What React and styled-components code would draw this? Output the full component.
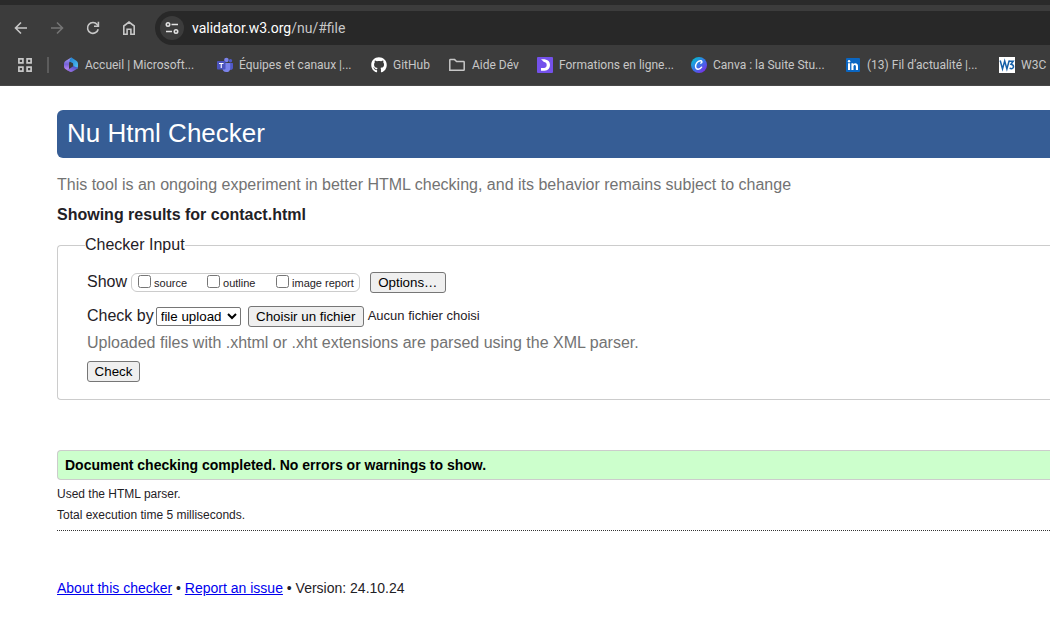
import React, { useRef, useState } from "react";
import styled, { createGlobalStyle } from "styled-components";
import { FaGithub } from "react-icons/fa";

const GlobalStyle = createGlobalStyle`
  * { box-sizing: border-box; }
  body {
    margin: 0;
    background: #fff;
    color: #1f2126;
    font-family: Arial, "Liberation Sans", sans-serif;
    font-size: 16px;
    line-height: 20px;
    overflow-x: hidden;
  }
`;

const Browser = styled.header`
  background: #3c3c3c;
  border-top: 5px solid #2a2a2a;
  border-bottom: 1px solid #484848;
  font-family: "Segoe UI", Roboto, sans-serif;
  overflow: hidden;
`;

const Toolbar = styled.div`
  display: flex;
  align-items: center;
  padding: 6px 0 0 11px;
`;

const NavButton = styled.button`
  display: grid;
  place-items: center;
  flex: none;
  width: 20px;
  height: 20px;
  margin-right: 16px;
  padding: 0;
  border: 0;
  background: none;
  color: ${(p) => (p.disabled ? "#757575" : "#c7c7c7")};
`;

const AddressBar = styled.div`
  display: flex;
  flex: 1;
  align-items: center;
  gap: 8px;
  height: 34px;
  padding-left: 5px;
  border-radius: 17px 0 0 17px;
  background: #282828;
`;

const SiteInfo = styled.button`
  display: grid;
  place-items: center;
  flex: none;
  width: 24px;
  height: 24px;
  padding: 0;
  border: 0;
  border-radius: 50%;
  background: #3c3c3c;
  color: #e3e3e3;
`;

const Url = styled.span`
  color: #c7c7c7;
  font-size: 14px;
  white-space: nowrap;
  b {
    color: #fff;
    font-weight: 400;
  }
`;

const Bookmarks = styled.nav`
  display: flex;
  align-items: center;
  height: 40px;
  padding-left: 17px;
`;

const AppsButton = styled(NavButton)`
  width: 16px;
  height: 16px;
  margin-right: 14px;
`;

const Divider = styled.span`
  flex: none;
  width: 2px;
  height: 16px;
  margin-right: 14px;
  background: #5c5c5c;
`;

const Bookmark = styled.a`
  display: flex;
  flex: none;
  align-items: center;
  gap: 6px;
  width: ${(p) => p.$width}px;
  color: #c7c7c7;
  font-size: 12px;
  text-decoration: none;
  white-space: nowrap;
  svg { flex: none; }
`;

const Page = styled.main`
  padding: 24px 0 0 57px;
`;

const Banner = styled.h1`
  margin: 0 0 17px;
  padding: 8px 10px 10px;
  border-radius: 6px 0 0 6px;
  background: #365d95;
  color: #fff;
  font-size: 26px;
  font-weight: 400;
  line-height: 30px;
`;

const Note = styled.p`
  margin: 0;
  color: #737373;
`;

const ResultsTitle = styled.h2`
  margin: 10px 0;
  font-size: 16px;
`;

const Fieldset = styled.fieldset`
  min-width: 0;
  margin: 0 0 50px;
  padding: 0 0 10px 27px;
  border: 1px solid #ccc;
  border-right: 0;
  border-radius: 4px 0 0 4px;
`;

const Legend = styled.legend`
  padding: 0;
`;

const Fields = styled.div`
  display: flex;
  flex-direction: column;
  padding: 10px 2px 0;
`;

const Row = styled.div`
  display: flex;
  align-items: center;
  height: ${(p) => p.$height}px;
  white-space: nowrap;
`;

const ShowOptions = styled.div`
  display: flex;
  align-items: center;
  height: 19px;
  margin: 0 10px 0 4px;
  padding: 0 5px;
  border: 1px solid #ccc;
  border-radius: 6px;
`;

const CheckOption = styled.label`
  display: flex;
  align-items: flex-start;
  gap: 3px;
  min-width: 69px;
  height: 17px;
  font-size: 11px;
  line-height: 19px;
  &:last-child { min-width: 0; }
  input {
    width: 13px;
    height: 13px;
    margin: 1px 0 0 1px;
  }
`;

const Button = styled.button`
  height: 21px;
  padding: 1px 6px;
  border: 1px solid #767676;
  border-radius: 3px;
  background: #efefef;
  color: #000;
  font-family: Arial, "Liberation Sans", sans-serif;
  min-width: ${(p) => p.$width}px;
`;

const Select = styled.select`
  width: 85px;
  height: 19px;
  margin: 0 7px 0 2px;
  border: 1px solid #767676;
  border-radius: 2px;
  background: #fff;
  color: #000;
  font-family: Arial, "Liberation Sans", sans-serif;
`;

const FileName = styled.span`
  margin-left: 4px;
  font-size: 13px;
`;

const Success = styled.p`
  margin: 0 0 4px;
  padding: 4px 7px;
  border: 1px solid #ccc;
  border-right: 0;
  border-radius: 4px 0 0 4px;
  background: #cfc;
  color: #000;
  font-size: 14px;
  font-weight: 700;
`;

const Detail = styled.p`
  margin: 0 0 1px;
  font-size: 12px;
`;

const Footer = styled.footer`
  margin-top: 5px;
  padding: 47px 0 37px;
  border-top: 1px dotted #333;
  font-size: 14px;
  a { color: #00e; }
`;

const Line = ({ children, size = 16 }) => (
  <svg width={size} height={size} viewBox="0 0 16 16" fill="none" stroke="currentColor" strokeWidth="1.6">
    {children}
  </svg>
);

const BackIcon = () => <Line><path d="M14 8H3M8 2.5 2.5 8 8 13.5" /></Line>;
const ForwardIcon = () => <Line><path d="M2 8h11M8 2.5 13.5 8 8 13.5" /></Line>;
const ReloadIcon = () => (
  <Line>
    <path d="M13.2 9.200A5.400 5.400 0 1 1 12.200 4.600l1 1.200" />
    <path d="M13.400 1.800v4.400H9" />
  </Line>
);
const HomeIcon = () => (
  <Line><path d="M2.800 14.200V6L8 2l5.200 4v8.200H9.900V9.300H6.100v4.900Z" /></Line>
);
const TuneIcon = () => (
  <Line>
    <circle cx="4" cy="4.500" r="1.700" />
    <path d="M7.500 4.500H14M2 11.500h6" />
    <circle cx="12" cy="11.500" r="1.700" />
  </Line>
);
const AppsIcon = () => (
  <Line>
    <path strokeWidth="1.700" d="M1.900 1.900h4v4h-4zM10.100 1.900h4v4h-4zM1.900 10.100h4v4h-4zM10.100 10.100h4v4h-4z" />
  </Line>
);

const MicrosoftIcon = () => (
  <svg width="16" height="16" viewBox="0 0 16 16">
    <defs>
      <linearGradient id="ms-a" x1="0" y1="0" x2="0" y2="1">
        <stop stopColor="#a9a1f2" /><stop offset=".5" stopColor="#7562d8" /><stop offset="1" stopColor="#c68af4" />
      </linearGradient>
      <linearGradient id="ms-b" x1="0" y1="0" x2="1" y2="1">
        <stop stopColor="#1c7ccd" /><stop offset="1" stopColor="#55c5f4" />
      </linearGradient>
      <linearGradient id="ms-c" x1="0" y1="1" x2="1" y2="0">
        <stop stopColor="#b67af0" /><stop offset="1" stopColor="#364cc0" />
      </linearGradient>
    </defs>
    <path fill="url(#ms-a)" d="M8.2.6 2.8 3.7Q1 4.8 1 6.8v3q0 1.500 1.300 2.300l2.700 1.500q1-.7 1-2.200V6.500q0-1.200 1-1.900L9.500 3Z" />
    <path fill="url(#ms-b)" d="M8.2.6Q6.300 1.900 6.500 4.500L10 6.300l.4 3.200 3.600 2.500q1-.8 1-2.200v-3q0-2-1.700-3.100L9.600 1.200Q8.900.7 8.200.6Z" />
    <path fill="url(#ms-c)" d="m2.400 12.100 4 2.500q1.600.9 3.200 0l3.800-2.300q1.600-1 1.600-2.800-.7 1.200-2.200.5L10.400 9 8 10.700q-1.200.7-2.200 1.400-1.600 1-3.400 0Z" />
  </svg>
);

const TeamsIcon = () => (
  <svg width="16" height="16" viewBox="0 0 16 16">
    <circle cx="9.400" cy="3" r="2.300" fill="#7b83eb" />
    <circle cx="13.500" cy="3.700" r="1.700" fill="#5059c9" />
    <path fill="#5059c9" d="M11.500 6h4q.5 0 .5.600v3.700q0 2.600-2.400 2.600-1.500 0-2.100-1Z" />
    <path fill="#7b83eb" d="M5.500 6h7.100q.6 0 .6.700v4.200q0 4.200-4 4.200-3.700 0-3.700-4Z" />
    <rect y="4" width="8.500" height="8.500" rx=".8" fill="#4b53bc" />
    <path fill="#fff" d="M2 6h4.500v1H4.800v4H3.700V7H2z" />
  </svg>
);

const FolderIcon = () => (
  <svg width="18" height="16" viewBox="0 0 18 16" fill="none" stroke="#c7c7c7" strokeWidth="1.500">
    <path d="M1.800 13.300V3.200q0-.6.600-.6h4.200l2 2h7q.6 0 .6.600v7.500q0 .6-.6.6Z" />
  </svg>
);

const TrainingIcon = () => (
  <svg width="16" height="16" viewBox="0 0 16 16">
    <rect width="16" height="16" rx="1" fill="#7451eb" />
    <path fill="#fff" d="M4 2.200h3.500Q13 3 13 8t-5.500 5.800H4V11h3Q9.700 10.700 9.700 8T7 5Z" />
  </svg>
);

const CanvaIcon = () => (
  <svg width="16" height="16" viewBox="0 0 16 16">
    <defs>
      <linearGradient id="canva" x1="0" y1=".1" x2=".8" y2="1">
        <stop stopColor="#00c4cc" /><stop offset=".5" stopColor="#3578e8" /><stop offset="1" stopColor="#7d2ae8" />
      </linearGradient>
    </defs>
    <circle cx="8" cy="8" r="8" fill="url(#canva)" />
    <path fill="none" stroke="#fff" strokeWidth="1.400" strokeLinecap="round" d="M9.800 6.200c1.800-.9 1.300-2.700-.5-2.500-3 .3-4.900 3.300-4.700 6 .3 3.400 4.200 3.100 6 .5" />
  </svg>
);

const LinkedInIcon = () => (
  <svg width="16" height="16" viewBox="0 0 16 16">
    <rect x="1" y="1" width="14" height="14" rx="1" fill="#0a66c2" />
    <path fill="#fff" d="M3 6.300h2.100V13H3zM6.400 6.300h2v.9c1-1.600 4.600-1.500 4.600 1.700V13h-2.100V9.600c0-2.200-2.400-2-2.400 0V13H6.400z" />
    <circle cx="4.050" cy="4.200" r="1.200" fill="#fff" />
  </svg>
);

const W3Icon = () => (
  <svg width="16" height="16" viewBox="0 0 16 16">
    <rect width="16" height="16" fill="#fff" />
    <path fill="none" stroke="#1660a8" strokeWidth="1.500" d="m1.200 3.500 2.300 8.500L5.700 4l2.200 8 2.300-8.500" />
    <path fill="none" stroke="#1660a8" strokeWidth="1.500" d="M10 4.200h4.200l-2.200 3q2.800.4 2.500 2.800-.7 2.500-3.900 1.200" />
  </svg>
);

const bookmarks = [
  { title: "Accueil | Microsoft...", width: 154, icon: <MicrosoftIcon /> },
  { title: "Équipes et canaux |...", width: 154, icon: <TeamsIcon /> },
  { title: "GitHub", width: 77, icon: <FaGithub size={16} color="#fff" /> },
  { title: "Aide Dév", width: 89, icon: <FolderIcon /> },
  { title: "Formations en ligne...", width: 154, icon: <TrainingIcon /> },
  { title: "Canva : la Suite Stu...", width: 154, icon: <CanvaIcon /> },
  { title: "(13) Fil d’actualité |...", width: 154, icon: <LinkedInIcon /> },
  { title: "W3C", width: 154, icon: <W3Icon /> },
];

export default function App() {
  const picker = useRef(null);
  const [fileName, setFileName] = useState("Aucun fichier choisi");

  return (
    <>
      <GlobalStyle />
      <Browser>
        <Toolbar>
          <NavButton aria-label="Retour"><BackIcon /></NavButton>
          <NavButton aria-label="Avancer" disabled><ForwardIcon /></NavButton>
          <NavButton aria-label="Actualiser"><ReloadIcon /></NavButton>
          <NavButton aria-label="Accueil"><HomeIcon /></NavButton>
          <AddressBar>
            <SiteInfo aria-label="Informations sur le site"><TuneIcon /></SiteInfo>
            <Url><b>validator.w3.org</b>/nu/#file</Url>
          </AddressBar>
        </Toolbar>
        <Bookmarks aria-label="Favoris">
          <AppsButton aria-label="Applications"><AppsIcon /></AppsButton>
          <Divider />
          {bookmarks.map((b) => (
            <Bookmark key={b.title} href="#" $width={b.width}>
              {b.icon}
              <span>{b.title}</span>
            </Bookmark>
          ))}
        </Bookmarks>
      </Browser>

      <Page>
        <Banner>Nu Html Checker</Banner>
        <Note>This tool is an ongoing experiment in better HTML checking, and its behavior remains subject to change</Note>
        <ResultsTitle>Showing results for contact.html</ResultsTitle>

        <Fieldset>
          <Legend>Checker Input</Legend>
          <Fields>
            <Row $height={34}>
              <span>Show</span>
              <ShowOptions>
                <CheckOption><input type="checkbox" />source</CheckOption>
                <CheckOption><input type="checkbox" />outline</CheckOption>
                <CheckOption><input type="checkbox" />image report</CheckOption>
              </ShowOptions>
              <Button type="button" $width={76}>Options…</Button>
            </Row>
            <Row $height={34}>
              <label htmlFor="method">Check by</label>
              <Select id="method" defaultValue="file upload">
                <option>address</option>
                <option>file upload</option>
                <option>text input</option>
              </Select>
              <Button type="button" $width={116} onClick={() => picker.current.click()}>Choisir un fichier</Button>
              <input
                ref={picker}
                type="file"
                hidden
                aria-label="Fichier"
                onChange={(e) => setFileName(e.target.files[0]?.name ?? "Aucun fichier choisi")}
              />
              <FileName>{fileName}</FileName>
            </Row>
            <Note>Uploaded files with .xhtml or .xht extensions are parsed using the XML parser.</Note>
            <Row $height={36}>
              <Button type="submit" $width={53}>Check</Button>
            </Row>
          </Fields>
        </Fieldset>

        <Success>Document checking completed. No errors or warnings to show.</Success>
        <Detail>Used the HTML parser.</Detail>
        <Detail>Total execution time 5 milliseconds.</Detail>

        <Footer>
          <a href="#about">About this checker</a> • <a href="#issue">Report an issue</a> • Version: 24.10.24
        </Footer>
      </Page>
    </>
  );
}
